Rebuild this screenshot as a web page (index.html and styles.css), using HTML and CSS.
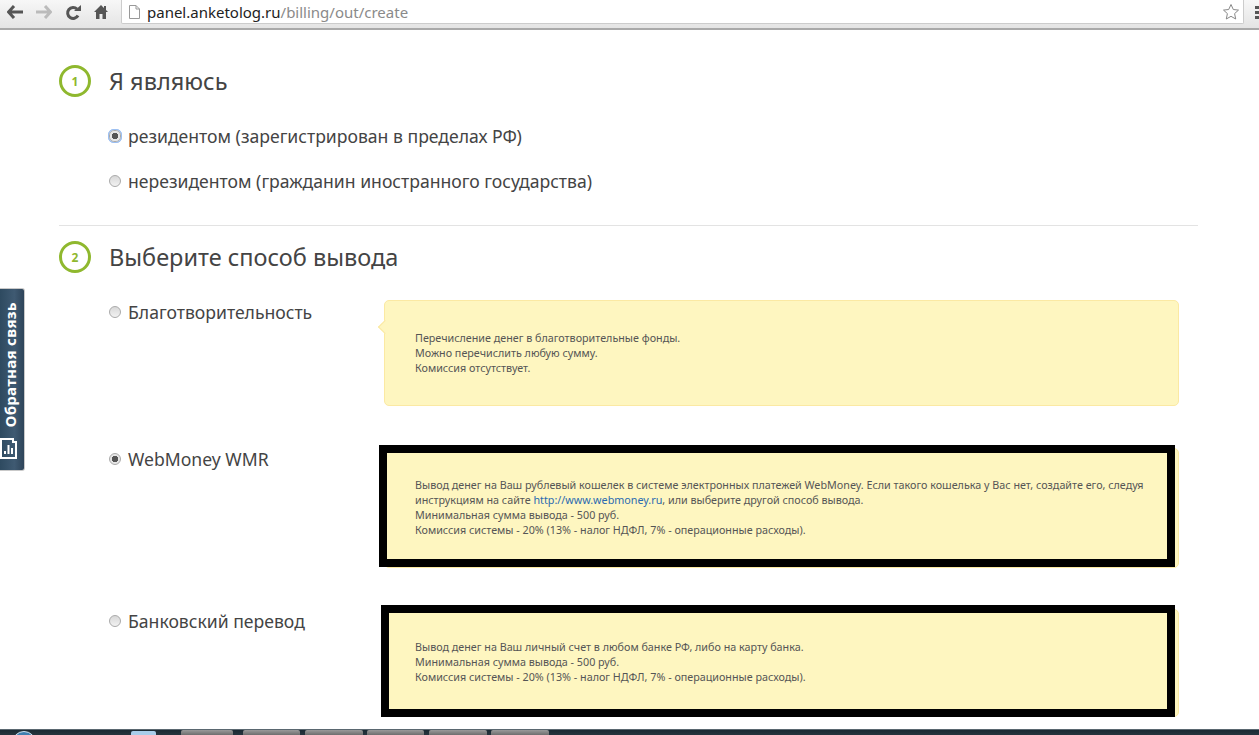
FILE: index.html
```html
<!DOCTYPE html>
<html lang="ru">
<head>
    <meta charset="UTF-8">
    <title>Вывод денег</title>
    <link rel="stylesheet" href="styles.css">
</head>
<body>
<header class="toolbar">
    <svg class="nav-icon" width="16" height="14" viewBox="0 0 16 14"><path d="M7 1 1.500 7 7 13M2 7h14" fill="none" stroke="#555" stroke-width="3"/></svg>
    <svg class="nav-icon" width="16" height="14" viewBox="0 0 16 14"><path d="M9 1l5.500 6L9 13M14 7H0" fill="none" stroke="#bbb" stroke-width="3"/></svg>
    <svg class="nav-icon" width="16" height="16" viewBox="0 0 16 16"><path d="M13 10.500A5.500 5.500 0 1 1 12 4" fill="none" stroke="#555" stroke-width="3"/><path d="M9 6h7V0z" fill="#555"/></svg>
    <svg class="nav-icon" width="14" height="14" viewBox="0 0 14 14"><path d="M7 0 0 7h2v7h3.500V9h3v5H12V7h2l-2-2V1h-2v2z" fill="#555"/></svg>
    <div class="omnibox">
        <svg width="11" height="14" viewBox="0 0 11 14"><path d="M.5.500h6.500l3.500 3.500v9.500H.5zM7 .5V4h3.500" fill="#fff" stroke="#999"/></svg>
        <span class="url"><span class="host">panel.anketolog.ru</span>/billing/out/create</span>
        <svg class="star" width="18" height="18" viewBox="0 0 18 18"><path d="M9 1.500l2.300 5 5.200.6-3.900 3.500 1.100 5.400L9 13.300 4.300 16l1.100-5.400L1.500 7.100l5.200-.6z" fill="#fff" stroke="#888"/></svg>
    </div>
    <div class="menu-icon"><i></i><i></i><i></i></div>
</header>

<main class="page">
    <a class="feedback">
        <svg width="17" height="21" viewBox="0 0 17 21"><path d="M1 1h12v3h3v16H1z" fill="none" stroke="#fff" stroke-width="2"/><path d="M4 16h2v-3H4zM7.500 16h2V7h-2zM11 16h2v-6h-2z" fill="#fff"/></svg>
        <span>Обратная связь</span>
    </a>

    <section class="step step-first">
        <h2 class="step-title"><span class="step-num">1</span>Я являюсь</h2>
        <label class="choice choice-resident"><span class="radio radio-on radio-focus"></span>резидентом (зарегистрирован в пределах РФ)</label>
        <label class="choice choice-resident"><span class="radio"></span>нерезидентом (гражданин иностранного государства)</label>
    </section>

    <section class="step">
        <h2 class="step-title"><span class="step-num">2</span>Выберите способ вывода</h2>

        <div class="method method-charity">
            <label class="choice"><span class="radio"></span>Благотворительность</label>
            <div class="note note-tail">
                Перечисление денег в благотворительные фонды.<br>
                Можно перечислить любую сумму.<br>
                Комиссия отсутствует.
            </div>
        </div>

        <div class="method method-wm">
            <label class="choice"><span class="radio radio-on"></span>WebMoney WMR</label>
            <div class="note">
                <span class="mark mark-wm"></span>
                Вывод денег на Ваш рублевый кошелек в системе электронных платежей WebMoney. Если такого кошелька у Вас нет, создайте его, следуя инструкциям на сайте <a href="#">http://www.webmoney.ru</a>, или выберите другой способ вывода.<br>
                Минимальная сумма вывода - 500 руб.<br>
                Комиссия системы - 20% (13% - налог НДФЛ, 7% - операционные расходы).
            </div>
        </div>

        <div class="method method-bank">
            <label class="choice"><span class="radio"></span>Банковский перевод</label>
            <div class="note">
                <span class="mark mark-bank"></span>
                Вывод денег на Ваш личный счет в любом банке РФ, либо на карту банка.<br>
                Минимальная сумма вывода - 500 руб.<br>
                Комиссия системы - 20% (13% - налог НДФЛ, 7% - операционные расходы).
            </div>
        </div>
    </section>
</main>

<footer class="taskbar">
    <span class="orb"></span>
    <span class="task-blue"></span>
    <span class="task task-1"></span>
    <span class="task task-2"></span>
    <span class="task task-3"></span>
    <span class="task task-4"></span>
    <span class="task task-5"></span>
    <span class="task task-6"></span>
</footer>
</body>
</html>
```

FILE: styles.css
```css
* {
    box-sizing: border-box;
}
html, body {
    margin: 0;
    height: 100%;
}
body {
    display: flex;
    flex-direction: column;
    height: 735px;
    overflow: hidden;
    background: #fff;
    color: #444;
    font-family: "Noto Sans", "Open Sans", sans-serif;
}

/* browser chrome */
.toolbar {
    display: flex;
    align-items: flex-start;
    flex: none;
    height: 30px;
    padding-left: 7px;
    background: linear-gradient(#f7f7f7, #e4e4e4);
    border-bottom: 2px solid #a9a9a9;
}
.nav-icon {
    margin: 5px 13px 0 0;
}
.omnibox {
    display: flex;
    align-items: center;
    flex: 1;
    height: 24px;
    padding: 0 3px 0 7px;
    background: #fff;
    border: 1px solid #ccc;
    border-top: 0;
    border-radius: 0 0 2px 2px;
}
.url {
    flex: 1;
    margin-left: 7px;
    font-size: 15px;
    color: #8a8a8a;
}
.host {
    color: #222;
}
.menu-icon {
    display: flex;
    flex-direction: column;
    gap: 2px;
    width: 15px;
    padding: 6px 0 0 11px;
}
.menu-icon i {
    display: block;
    height: 3px;
    background: #555;
}

/* page */
.page {
    position: relative;
    flex: 1;
    min-height: 0;
    overflow: hidden;
    padding: 0 61px 0 59px;
}
.step-first {
    padding-top: 20px;
    height: 196px;
    border-bottom: 1px solid #e3e3e3;
}
.step-title {
    display: flex;
    align-items: center;
    margin: 0;
    height: 32px;
    font-size: 23.500px;
    font-weight: 400;
    color: #444;
}
.step-num {
    display: flex;
    align-items: center;
    justify-content: center;
    width: 32px;
    height: 32px;
    margin-right: 18px;
    border: 3px solid #8fb82e;
    border-radius: 50%;
    font-size: 12px;
    font-weight: 700;
    color: #8fb82e;
}
.choice {
    display: flex;
    align-items: center;
    flex: none;
    width: 275px;
    height: 24px;
    font-size: 17.600px;
    white-space: nowrap;
}
.choice-resident {
    width: auto;
    margin: 0 0 21px 50px;
}
.step-first .step-title {
    margin-bottom: 27px;
}
.radio {
    flex: none;
    width: 12px;
    height: 12px;
    margin-right: 7px;
    border: 1px solid #aaa;
    border-radius: 50%;
    background: linear-gradient(#d8d8d8, #f2f2f2);
}
.radio-on {
    background: radial-gradient(circle, #555 0 3px, #e6e6e6 3.5px);
}
.radio-focus {
    box-shadow: 0 0 0 1px #9dc0f2;
    outline: 1px solid #9dc0f2;
    border-radius: 40%;
}

/* payout methods */
.step > .step-title {
    margin-top: 15px;
}
.method {
    display: flex;
    margin-left: 50px;
}
.method-charity {
    margin-top: 27px;
}
.method-wm {
    margin-top: 42px;
}
.method-wm .choice {
    margin-top: -1px;
}
.method-bank {
    margin-top: 41px;
}
.note {
    position: relative;
    flex: none;
    width: 795px;
    padding: 29px 30px 0;
    background: #fef6c0;
    border: 1px solid #fbe9a3;
    border-radius: 5px;
    font-size: 10.760px;
    line-height: 15px;
    color: #555;
}
.method-charity .note {
    height: 106px;
}
.method-wm .note {
    height: 120px;
    padding-top: 28px;
}
.method-bank .note {
    height: 108px;
}
.note a {
    color: #2a6ab0;
    text-decoration: none;
}
.note-tail::before {
    content: "";
    position: absolute;
    left: -5px;
    top: 21px;
    width: 9px;
    height: 9px;
    background: #fef6c0;
    border-left: 1px solid #fbe9a3;
    border-bottom: 1px solid #fbe9a3;
    transform: rotate(45deg);
}

/* black frames drawn over the screenshot */
.mark {
    position: absolute;
    border: 8px solid #000;
    pointer-events: none;
}
.mark-wm {
    left: -6px;
    top: -4px;
    width: 796px;
    height: 122px;
}
.mark-bank {
    left: -4px;
    top: -5px;
    width: 794px;
    height: 112px;
}

.feedback {
    position: absolute;
    left: 0;
    top: 258px;
    display: flex;
    flex-direction: column-reverse;
    align-items: center;
    justify-content: flex-start;
    gap: 11px;
    width: 25px;
    height: 183px;
    padding: 0 0 11px;
    background: linear-gradient(90deg, #2e4a60, #3f5a72 60%, #2e4459);
    border: 1px solid #c9c9c9;
    border-left: 0;
    border-radius: 0 3px 3px 0;
    color: #fff;
    font-size: 15px;
    font-weight: 700;
}
.feedback svg {
    flex: none;
    margin-left: -7px;
}
.feedback span {
    writing-mode: vertical-rl;
    transform: rotate(180deg);
    white-space: nowrap;
    letter-spacing: .3px;
    margin-left: -5px;
}

/* windows taskbar, only its top edge is visible */
.taskbar {
    position: relative;
    flex: none;
    height: 6px;
    background: linear-gradient(#5a6770 0 1px, #1b2a33 1px, #26353e);
}
.task {
    position: absolute;
    top: 1px;
    height: 5px;
    background: linear-gradient(#9a9a9a, #6e6e6e);
    border-radius: 2px 2px 0 0;
}
.task-1 { left: 181px; width: 52px; }
.task-2 { left: 243px; width: 57px; }
.task-3 { left: 305px; width: 58px; }
.task-4 { left: 367px; width: 57px; }
.task-5 { left: 429px; width: 58px; }
.task-6 { left: 491px; width: 58px; }
.orb {
    position: absolute;
    left: 12px;
    top: 2px;
    width: 24px;
    height: 24px;
    border: 1px solid #cfe2f0;
    border-radius: 50%;
    background: #3f7fb0;
}
.task-blue {
    position: absolute;
    left: 131px;
    top: 2px;
    width: 25px;
    height: 4px;
    border-radius: 2px 2px 0 0;
    background: #a9cdea;
}
```
